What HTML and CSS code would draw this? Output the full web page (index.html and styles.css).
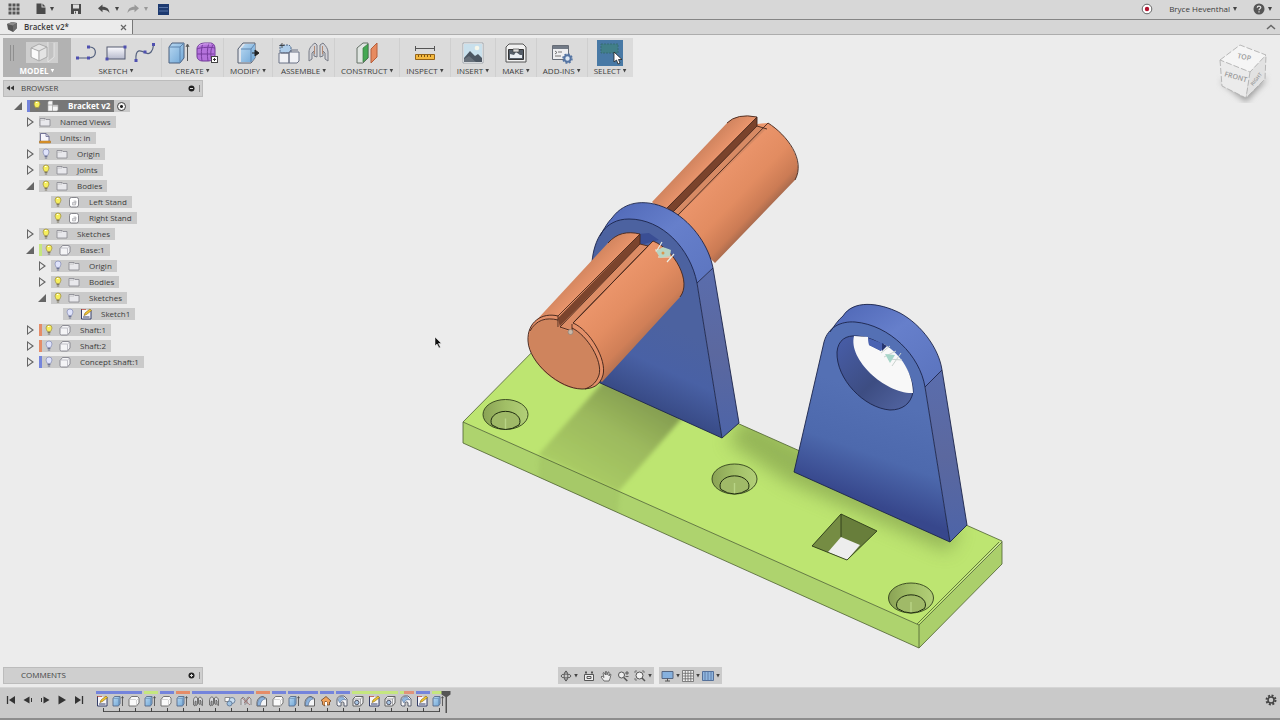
FILE: index.html
```html
<!DOCTYPE html>
<html lang="en">
<head>
<meta charset="utf-8">
<title>Bracket v2</title>
<link rel="stylesheet" href="styles.css">
</head>
<body>
<svg class="defs" aria-hidden="true">
  <defs>
    <linearGradient id="gBlue" x1="0" y1="0" x2="1" y2="1"><stop offset="0" stop-color="#b9d9f2"/><stop offset="1" stop-color="#6fa6d6"/></linearGradient>
    <linearGradient id="gRect" x1="0" y1="0" x2="0" y2="1"><stop offset="0" stop-color="#fbfbff"/><stop offset="1" stop-color="#b5b9cc"/></linearGradient>
    <symbol id="bulb" viewBox="0 0 8 12"><path d="M4 1a3 3 0 0 0-3 3c0 1.500 1 2 1.400 3.500h3.200C6 6 7 5.500 7 4a3 3 0 0 0-3-3z" fill="#f6ee5c" stroke="#a39648" stroke-width=".8"/><path d="M3 2.500h1.500" stroke="#fff"/><path d="M2.600 8.500h2.800M2.800 10h2.400" stroke="#7d7763" stroke-width="1"/></symbol>
    <symbol id="bulboff" viewBox="0 0 8 12"><path d="M4 1a3 3 0 0 0-3 3c0 1.500 1 2 1.400 3.500h3.200C6 6 7 5.500 7 4a3 3 0 0 0-3-3z" fill="#dfe3fb" stroke="#8389b5" stroke-width=".7"/><path d="M2.600 8.500h2.800M2.800 10h2.400" stroke="#6d7290" stroke-width="1"/></symbol>
    <symbol id="folder" viewBox="0 0 12 12"><path d="M1 10V2.500h5l1 1h4V10z" fill="#e8e8ec" stroke="#85858d" stroke-width=".8"/><path d="M1.500 3.800h4.800" stroke="#fff"/><path d="M6 2.500V4H1" fill="none" stroke="#85858d" stroke-width=".5"/></symbol>
    <symbol id="body" viewBox="0 0 12 12"><rect x="1.500" y="1.500" width="9" height="9.500" rx="2" fill="#fff" stroke="#6d6d75" stroke-width=".8"/><path d="M4.500 9V6.500h3V9zM5.500 5h2.500v2.500" fill="#ddd" stroke="#a5a5ad" stroke-width=".6"/></symbol>
    <symbol id="comp" viewBox="0 0 12 12"><path d="M1 4.500 3.500 1.500H9q2 0 2 1.500v5L8.500 11H2.500Q1 11 1 9.500z" fill="#f4f4f6" stroke="#777781" stroke-width=".8"/><path d="M1.500 4h6q1 0 1 1v5.500M8.300 4.200 10.600 2" fill="none" stroke="#aaaab4" stroke-width=".7"/></symbol>
    <symbol id="asm" viewBox="0 0 12 12"><path d="M1 10V2l1-1h3.500v4H11v4.500L10 11H1z" fill="#f5f5f5" stroke="#aaa" stroke-width=".6"/><path d="M1 5h4.500M5.500 5v6M6 6h5" stroke="#999" stroke-width=".7"/></symbol>
    <symbol id="units" viewBox="0 0 12 12"><path d="M1.500 9.500v-8H7l3 3v5z" fill="#f6f5fb" stroke="#68688e" stroke-width=".9"/><path d="M7 1.500v3h3" fill="none" stroke="#68688e" stroke-width=".8"/><path d="M.5 9h11v2H.5z" fill="#e59a2d" stroke="#9c641a" stroke-width=".5"/></symbol>
    <symbol id="sketch" viewBox="0 0 12 12"><path d="M1.500 1v10H11V2.500" fill="#f7f7fa" stroke="#333d68" stroke-width="1"/><path d="M3 9h6.500" stroke="#333d68"/><path d="m4 7.500 1-2.500 5-4 1.500 1.500-5 4z" fill="#f2c52f" stroke="#856414" stroke-width=".6"/><path d="M1 1.500h5" stroke="#b83b2b" stroke-width=".7"/></symbol>
    <symbol id="extrude" viewBox="0 0 12 12"><path d="M1 3.500 2.500 1.500h5.500v7L6.500 11H1z" fill="url(#gBlue)" stroke="#4b5e7d" stroke-width=".8"/><path d="M1 3.500h5.500V11M6.500 3.500 8 1.500" fill="none" stroke="#6689b0" stroke-width=".6"/><path d="M10.500 11V2M9.400 3.200 10.500 1.500 11.600 3.200" fill="none" stroke="#444" stroke-width=".8"/></symbol>
    <symbol id="box" viewBox="0 0 12 12"><path d="M1 4.500 3.500 1.500H9.500L11 3v5L8.500 11H1z" fill="#fafafa" stroke="#666" stroke-width=".9"/><path d="M8.500 11V5.500L11 3M8.500 5.500 7.500 4.500H1.500" fill="none" stroke="#bbb" stroke-width=".6"/></symbol>
    <symbol id="joint" viewBox="0 0 12 12"><path d="M1.500 10V6C1.500 2 4 1 5.500 3V9.500L4 10.500V6l-1 .5V11zM6.500 3c2-2 4 0 4 3v4.500l-1.500-1V6l-1-1v4.500l-1.500-1z" fill="#d9dade" stroke="#555" stroke-width=".8"/></symbol>
    <symbol id="parts" viewBox="0 0 12 12"><path d="M1 2.500h5v4H1z" fill="#fafafa" stroke="#777" stroke-width=".8"/><circle cx="8" cy="5.500" r="3" fill="#c7dcef" stroke="#586f8d" stroke-width=".8"/><circle cx="5.500" cy="8.500" r="2.500" fill="#9fc3e3" stroke="#586f8d" stroke-width=".8"/></symbol>
    <symbol id="rigid" viewBox="0 0 12 12"><path d="M1 10V4l2-2 2 2v6M7 9V3l2-1 2 2v6" fill="#d2d2d6" stroke="#777" stroke-width=".8"/><path d="m2 3 8 7M10 2 4 8" stroke="#a06868" stroke-width=".8"/></symbol>
    <symbol id="fillet" viewBox="0 0 12 12"><path d="M1 11V8c0-4 3-6.500 6-6.500l3.500 2V11z" fill="#f4f5f7" stroke="#555" stroke-width=".9"/><path d="M1.500 8C2 4.500 4 2 7 1.800L9.500 4C6.500 4 4.500 7 4.300 10.500H1.500z" fill="#8cb2dc" stroke="#4e6384" stroke-width=".6"/></symbol>
    <symbol id="home" viewBox="0 0 12 12"><path d="M1 5.500 6 1.500l5 4.500-1.500 1V10H7V7L5 6.500V11L2.500 9.500v-3z" fill="#f2a45c" stroke="#6b4426" stroke-width=".8"/><path d="M5 7h2v3.500H5z" fill="#fff"/></symbol>
    <symbol id="shell" viewBox="0 0 12 12"><path d="M1 10V5c0-2.500 2-4 4-4h3l3 3v7H8V8c0-1.500-3-1.500-3 0v3H2z" fill="#f5f5f7" stroke="#4f5565" stroke-width=".9"/><path d="M2 5c1-3 3-3.500 5-3l3 3c-3-1-5 0-6 3z" fill="#94b8de" stroke="#4d648a" stroke-width=".5"/></symbol>
    <symbol id="hole" viewBox="0 0 12 12"><path d="M1 4 3.500 1.500H11V8l-2.500 3H1z" fill="#f3f3f5" stroke="#555" stroke-width=".9"/><path d="M1 4h7.500v7M8.500 4 11 1.500" fill="none" stroke="#777" stroke-width=".6"/><circle cx="4.800" cy="7.500" r="2.200" fill="#a9c6e4" stroke="#445" stroke-width=".9"/></symbol>
    <symbol id="gear" viewBox="0 0 12 12"><circle cx="6" cy="6" r="4.500" fill="none" stroke="#444" stroke-width="2" stroke-dasharray="2 1.530"/><circle cx="6" cy="6" r="3" fill="none" stroke="#444" stroke-width="1.500"/></symbol>
  </defs>
</svg>

<header class="appbar">
  <button class="tool" aria-label="Data panel"><svg width="12" height="12" viewBox="0 0 12 12"><path d="M.5.500h3v3h-3zm4 0h3v3h-3zm4 0h3v3h-3zm-8 4h3v3h-3zm4 0h3v3h-3zm4 0h3v3h-3zm-8 4h3v3h-3zm4 0h3v3h-3zm4 0h3v3h-3z" fill="#555"/></svg></button>
  <button class="tool file" aria-label="File"><svg width="10" height="12" viewBox="0 0 10 12"><path d="M.5.500h5v4h4V11h-9zM6.500.500l3 3h-3z" fill="#4a4a4a"/></svg><i class="caret"></i></button>
  <button class="tool" aria-label="Save"><svg width="12" height="12" viewBox="0 0 12 12"><path d="M1 1h10v10H1z" fill="#4a4a4a"/><path d="M3 1.500h6v4H3zM4 8h4v3H4z" fill="#ddd"/><path d="M5 8.500h1v2H5z" fill="#4a4a4a"/></svg></button>
  <button class="tool undo" aria-label="Undo"><svg width="12" height="10" viewBox="0 0 12 10"><path d="M0 4.200 4.500.500v2.300C9 2.800 11 5 11.500 9 10 6.500 8 5.800 4.500 5.800v2.400z" fill="#4a4a4a"/></svg><i class="caret"></i></button>
  <button class="tool redo" aria-label="Redo"><svg width="12" height="10" viewBox="0 0 12 10"><path d="M12 4.200 7.500.500v2.300C3 2.800 1 5 .5 9 2 6.500 4 5.800 7.500 5.800v2.400z" fill="#999"/></svg><i class="caret"></i></button>
  <button class="tool" aria-label="Job status"><svg width="11" height="11" viewBox="0 0 11 11"><path d="M0 0h11v11H0z" fill="#1d3a70"/><path d="M1 3.500h9M1 7h9" stroke="#6482b4" stroke-width=".8"/></svg></button>
  <span class="fill"></span>
  <button class="tool rec" aria-label="Record"><svg width="12" height="12" viewBox="0 0 12 12"><circle cx="6" cy="6" r="4.800" fill="#fff" stroke="#666" stroke-width="1"/><circle cx="6" cy="6" r="2.200" fill="#b3122e"/></svg></button>
  <button class="tool user">Bryce Heventhal<i class="caret"></i></button>
  <button class="tool help" aria-label="Help"><svg width="12" height="12" viewBox="0 0 12 12"><circle cx="6" cy="6" r="5.500" fill="#555"/><path d="M4.200 4.800C4.200 2.500 7.800 2.500 7.800 4.600 7.800 5.800 6 5.800 6 7.200M6 8.200v1.300" fill="none" stroke="#e5e5e5" stroke-width="1.200"/></svg><i class="caret"></i></button>
</header>

<nav class="tabs">
  <div class="tab"><svg width="12" height="12" viewBox="0 0 12 12"><path d="M1 3 6 1l5 1v5L7 11 2 8.500z" fill="#555"/><path d="M1 3 6 1l5 1-4 2.500z" fill="#8b8b8b"/><path d="M7 4.500 11 2v5L7 11z" fill="#6c6c6c"/></svg><span>Bracket v2*</span><button aria-label="Close tab"><svg width="7" height="7" viewBox="0 0 7 7"><path d="m1 1 5 5M6 1 1 6" stroke="#666" stroke-width="1.200"/></svg></button></div>
  <button class="collapse" aria-label="Collapse"><svg width="10" height="6" viewBox="0 0 10 6"><path d="m1 5 4-3.500L9 5" fill="none" stroke="#666" stroke-width="1.500"/></svg></button>
</nav>

<main class="workspace">
  <svg class="model" viewBox="0 35 1280 652" role="img" aria-label="Bracket assembly">
    <defs>
      <linearGradient id="shA" gradientUnits="userSpaceOnUse" x1="575" y1="275" x2="645" y2="345"><stop offset="0" stop-color="#d2855f"/><stop offset=".22" stop-color="#ee986e"/><stop offset=".6" stop-color="#e38d62"/><stop offset=".85" stop-color="#d07f57"/><stop offset="1" stop-color="#ab6d50"/></linearGradient>
      <linearGradient id="shB" gradientUnits="userSpaceOnUse" x1="690" y1="160" x2="757" y2="224"><stop offset="0" stop-color="#cf835e"/><stop offset=".22" stop-color="#ed976e"/><stop offset=".65" stop-color="#e28c61"/><stop offset=".88" stop-color="#cb7b54"/><stop offset="1" stop-color="#9f664c"/></linearGradient>
      <linearGradient id="stL" gradientUnits="userSpaceOnUse" x1="680" y1="330" x2="645" y2="406"><stop offset="0" stop-color="#4c62a0"/><stop offset=".5" stop-color="#4961a5"/><stop offset="1" stop-color="#374984"/></linearGradient>
      <linearGradient id="stR" gradientUnits="userSpaceOnUse" x1="890" y1="400" x2="855" y2="498"><stop offset="0" stop-color="#5470b4"/><stop offset=".55" stop-color="#4d69ad"/><stop offset="1" stop-color="#37478c"/></linearGradient>
      <linearGradient id="rim" x1="0" y1="0" x2="1" y2="1"><stop offset="0" stop-color="#4d65b4"/><stop offset=".45" stop-color="#667fcb"/><stop offset="1" stop-color="#5a73bd"/></linearGradient>
      <linearGradient id="edge" x1="0" y1="0" x2="0" y2="1"><stop offset="0" stop-color="#5a6dad"/><stop offset=".5" stop-color="#5b689f"/><stop offset="1" stop-color="#4d64a8"/></linearGradient>
      <linearGradient id="bore" x1="0" y1="0" x2="1" y2="1"><stop offset="0" stop-color="#485eaa"/><stop offset=".55" stop-color="#3d4d82"/><stop offset="1" stop-color="#5467a5"/></linearGradient>
      <linearGradient id="cone" x1="0" y1="0" x2="1" y2="0"><stop offset="0" stop-color="#8aa255"/><stop offset=".5" stop-color="#a1bf66"/><stop offset="1" stop-color="#b2cf78"/></linearGradient>
      <linearGradient id="cast" gradientUnits="userSpaceOnUse" x1="640" y1="395" x2="590" y2="480"><stop offset="0" stop-color="#849d50"/><stop offset=".45" stop-color="#9cb95d"/><stop offset="1" stop-color="#a9cb65"/></linearGradient>
      <filter id="soft" x="-20%" y="-20%" width="140%" height="140%"><feGaussianBlur stdDeviation="2"/></filter>
      <filter id="softer" x="-30%" y="-30%" width="160%" height="160%"><feGaussianBlur stdDeviation="9"/></filter>
      <clipPath id="top"><path d="m463 422 83-84 456 203-83 84z"/></clipPath>
      <clipPath id="front"><path d="m463 422 456 203v23L463 443z"/></clipPath>
      <symbol id="bore-hole" viewBox="0 0 48 34" overflow="visible">
        <ellipse cx="24" cy="17" rx="22.500" ry="15" fill="url(#cone)" stroke="#31401c" stroke-width=".9"/>
        <path d="M10.500 27.500a14.500 10 0 1 1 27 0Q24 36.500 10.500 27.500z" fill="#a0ba68" stroke="#1f2b10" stroke-width="1"/>
        <path d="M24 31V21" stroke="#b9d486" stroke-width="1.400"/>
      </symbol>
    </defs>

    <path d="m463 422 83-84 456 203-83 84z" fill="#bde571"/>
    <path d="m463 422 456 203v23L463 443z" fill="#aed36e"/>
    <path d="m919 625 83-83v22l-83 84z" fill="#abcf6b"/>
    <g clip-path="url(#top)">
      <path d="m604 381-66 74 80 37 65-75z" fill="url(#cast)" filter="url(#soft)"/>
      <path d="m745 415 75 40 140 75-12 22-160-70-60-40z" fill="#7c9746" opacity=".6" filter="url(#softer)"/>
    </g>
    <g clip-path="url(#front)"><path d="m540 452 80 36-4 35-78-35z" fill="#9ebf62" filter="url(#soft)" opacity=".5"/></g>
    <g fill="none" stroke="#4d6130" stroke-width=".8">
      <path d="m463 422 83-84 456 203v23l-83 84-456-205zM463 422l456 203v23M919 625l83-83M917 624l82-82"/>
    </g>
    <use href="#bore-hole" x="481.500" y="397.500" width="48" height="34"/>
    <use href="#bore-hole" x="710.500" y="462" width="48" height="34"/>
    <use href="#bore-hole" x="887" y="581" width="48" height="34"/>
    <path d="m841 514 36 17-30 29-35-14z" fill="#687e3b"/>
    <path d="m841 514-29 32 16 6 13-15z" fill="#758c43"/>
    <path d="m841 537 19 8-13 15-19-8z" fill="#ededed"/>
    <path d="m841 514 36 17-30 29-35-14zM841 514v23" fill="none" stroke="#2d3b18" stroke-width=".9"/>

    <path d="M652 202 727 123Q737 113 757 117v7l11-1C785 133 806 160 795 180L715 263z" fill="url(#shB)"/>
    <path d="m757 117-90 91 7 5 83-87z" fill="#7a432c"/>
    <path d="m757 126 9 3-89 88-5-4z" fill="#d78a64"/>
    <path d="M727 123Q737 113 757 117v9l10 3M768 123C787 135 806 160 795 180M768 123l-91 93M757 117l-90 91M757 126l-84 86" fill="none" stroke="#43251b" stroke-width=".9"/>

    <path d="M600 236C605 227 608 222 612 218 625 200 648 198 672 211 694 224 709 247 713 268L697 283 682 300z" fill="url(#rim)"/>
    <path d="M592 262C594 240 604 219 629 219 662 219 690 248 697 283L722 438 567 368z" fill="url(#stL)"/>
    <path d="m697 283 16-15 26 155-17 15z" fill="url(#edge)"/>
    <path d="M567 368 592 262C594 240 604 219 629 219 662 219 690 248 697 283L722 438zM600 236C605 227 608 222 612 218 625 200 648 198 672 211 694 224 709 247 713 268l26 155-17 15M697 283l16-15" fill="none" stroke="#1b2449" stroke-width=".9"/>
    <path d="m638 234 3 11 10-3 8-2-10-7z" fill="#3a4e94"/>

    <path d="M532 325 608 243C617 233 627 231 640 234v10l8 2 5-5C675 250 692 282 680 297L602 382z" fill="url(#shA)"/>
    <path d="M528 341C527 322 542 312 558 316L559 327l13 3 1-7C590 330 607 360 603 375 600 386 592 389 582 389 560 389 529 363 528 341z" fill="#e38f68"/>
    <path d="M529 342C528 324 543 317 558 320v7l12 5 2-4C587 335 603 361 599 375 596 385 589 389 580 389 560 389 530 365 529 342z" fill="#cf845d"/>
    <path d="m558 318 82-84v10l-80 84z" fill="#7b442d"/>
    <path d="m559 327 81-83 8 2-76 80v5z" fill="#dc8c65"/>
    <path d="M608 243C617 233 627 231 640 234v10l8 2M653 241C675 250 692 282 680 297M653 241 573 323M640 234l-82 82v11M640 244l-80 83 12 4v-7M648 246l-74 76" fill="none" stroke="#45261b" stroke-width=".9"/>
    <path d="M528 341C527 322 542 312 558 316M573 323C590 330 607 360 603 375 600 386 592 389 582 389 560 389 529 363 528 341M530 331C536 320 546 317 558 320M572 328C587 335 603 361 599 375 596 384 590 387 585 389" fill="none" stroke="#3a2018" stroke-width=".9"/>
    <g stroke="#e9eee6" stroke-width="1.200" fill="none"><path d="m656 252 6-10M667 262l7-8M655 250h14M658 257h14"/></g>
    <path d="m656 251 7-4 8 3-1 6-10 2z" fill="#b9d5c3"/><circle cx="663" cy="253" r="1.500" fill="#d8974f"/>
    <circle cx="570.500" cy="332" r="2.500" fill="#c9b9a8" stroke="#8d8178" stroke-width=".7"/>

    <path d="M830 332C835 325 838 320 843 316 853 300 878 302 900 313 922 325 939 349 942 370L925 387 880 345z" fill="url(#rim)"/>
    <path d="M794 472 824 342C828 327 841 321 855 322 890 325 920 356 925 387L950 542z" fill="url(#stR)"/>
    <path d="m925 387 17-17 25 155-17 17z" fill="url(#edge)"/>
    <path d="M794 472 824 342C828 327 841 321 855 322 890 325 920 356 925 387L950 542zM830 332C835 325 838 320 843 316 853 300 878 302 900 313 922 325 939 349 942 370l25 155-17 17M925 387l17-17" fill="none" stroke="#1b2449" stroke-width=".9"/>
    <path d="M837 352C838 340 846 335 857 336 888 338 914 371 913 392 911 404 902 410 890 410 864 408 836 379 837 352z" fill="url(#bore)" stroke="#1b2449" stroke-width=".9"/>
    <path d="M854 336 868 337 869 345 881 351 884 344C902 355 913 374 913 393 886 394 848 360 854 336z" fill="#f8f8f8"/>
    <path d="m868 338 1 7 12 6 3-7z" fill="#4a63b2"/>
    <path d="M882 351v-8l5 3z" fill="#26356f"/>
    <g stroke="#c9d3cf" stroke-width="1" fill="none"><path d="m881 353 9-7M892 366l9-13M884 357l12-6M888 359l14 1"/></g>
    <path d="m885 354 10 1-5 8z" fill="#a7d5c8"/>

    <path d="M435 337v9l2-2 2 4 1.500-.7-2-3.800h3z" fill="#111" stroke="#fff" stroke-width=".5"/>
  </svg>

  <div class="ribbon" role="toolbar" aria-label="Model tools">
    <button class="group mode"><span class="icons"><i class="grip"></i><svg width="32" height="24" viewBox="0 0 32 24"><path d="M0 1h32v21H0z" fill="#cecece"/><path d="M22 1v20l6-5V2" fill="#c2c2c2" stroke="#eee" stroke-width=".7"/><path d="m5 7 8-4 8 3v10l-8 4-8-4z" fill="#e4e4e4" stroke="#aaa"/><path d="m5 7 8 3 8-4M13 10v10" fill="none" stroke="#aaa"/><path d="m6 8 6 2.500v8L6 16z" fill="#fafafa"/></svg></span><span class="label">MODEL<i class="caret"></i></span></button>
    <div class="group"><span class="icons">
      <button aria-label="Line"><svg width="24" height="24" viewBox="0 0 24 24"><path d="M2 17h11c10 0 9-11 2-11" fill="none" stroke="#54617e" stroke-width="1.200"/><path d="M1 15.500h3v3H1zm11 0h3v3h-3zM12 4.500h3v3h-3z" fill="#4f50b0"/></svg></button>
      <button aria-label="Rectangle"><svg width="24" height="24" viewBox="0 0 24 24"><rect x="3" y="6" width="18" height="12" fill="url(#gRect)" stroke="#555b70"/><path d="M19.500 4.500h3v3h-3zM1.500 16.500h3v3h-3z" fill="#4f50b0"/></svg></button>
      <button aria-label="Spline"><svg width="24" height="24" viewBox="0 0 24 24"><path d="M3 19C2 6 9 10 13 12s7-2 7.500-8" fill="none" stroke="#54617e" stroke-width="1.200"/><path d="M1.500 18h3v3h-3zm9-8.500h3v3h-3zM19 2h3v3h-3z" fill="#4f50b0"/></svg></button>
    </span><button class="label">SKETCH<i class="caret"></i></button></div>
    <div class="group"><span class="icons">
      <button aria-label="Extrude"><svg width="24" height="24" viewBox="0 0 24 24"><path d="M3 6 6 2h12v15l-4 5H3z" fill="url(#gBlue)" stroke="#4b5e7d"/><path d="M3 6h11v16M14 6l4-4" fill="none" stroke="#5d84ae"/><path d="M21.500 20V4M20 6l1.500-3L23 6" fill="none" stroke="#555"/></svg></button>
      <button aria-label="Create form"><svg width="24" height="24" viewBox="0 0 24 24"><path d="M2 8C2 4 6 2 10 2h5c4 0 5 3 5 6v6c0 4-4 6-7 6H8c-4 0-6-2-6-5z" fill="#b472dc" stroke="#713b99"/><path d="M2 8c4-2 14-2 18-1M2 13h17M8 2C6 7 6 14 7 20M14 2c-2 5-2 12-1 18M18 4c-3 5-2 9-2 14" fill="none" stroke="#773d9e"/><path d="M4 5c3-3 9-2 12-2" stroke="#dbaef2" fill="none"/><rect x="16.500" y="15.500" width="6" height="6" fill="#fff" stroke="#444"/><path d="M19.500 17v3M18 18.500h3" stroke="#333"/></svg></button>
    </span><button class="label">CREATE<i class="caret"></i></button></div>
    <div class="group"><span class="icons">
      <button aria-label="Press pull"><svg width="24" height="24" viewBox="0 0 24 24"><path d="M2 8 7 2h12v15l-4 5H2z" fill="#e1e5eb" stroke="#555f70"/><path d="M5 8 9 3h10v14l-4 4H5z" fill="url(#gBlue)"/><path d="M5 8h10v13M15 8l4-5" fill="none" stroke="#5d84ae"/><path d="M16 12h4M19 9l4 3-4 3z" fill="#222" stroke="#222"/></svg></button>
    </span><button class="label">MODIFY<i class="caret"></i></button></div>
    <div class="group"><span class="icons">
      <button aria-label="New component"><svg width="24" height="24" viewBox="0 0 24 24"><path d="M3 4h9l2 2v6H3z" fill="#aecdea" stroke="#516786" stroke-dasharray="2 1"/><path d="M2 12h10v10H2zM12 11h10v9l-2 2h-8z" fill="#f0f1f5" stroke="#6b7286"/><path d="M4 12h8l2-3h7" fill="none" stroke="#6b7286"/><path d="M5 2v5M2.500 4.500h5" stroke="#333" stroke-width=".8"/></svg></button>
      <button aria-label="Joint"><svg width="24" height="24" viewBox="0 0 24 24"><path d="M3 20V11c0-4 3-7 6-9l2 2v12l-3-1v-5l-2 2v6zM14 4l3-2c3 3 5 6 5 9v9l-3-2v-6l-2-2v5l-3 1z" fill="#d3d3d7" stroke="#777b86"/><path d="M8.500 5v8M16.500 5v8" stroke="#b58a72"/></svg></button>
    </span><button class="label">ASSEMBLE<i class="caret"></i></button></div>
    <div class="group"><span class="icons">
      <button aria-label="Plane"><svg width="24" height="24" viewBox="0 0 24 24"><path d="M2 7 8 2h5v15l-5 5H2z" fill="#dfe5e1" stroke="#657067"/><path d="m8 7 5-4v14l-5 4z" fill="#44a852" stroke="#387640" stroke-width=".7"/><path d="m16 8 6-6v14l-6 6z" fill="#e78b60" stroke="#b75f3b"/></svg></button>
    </span><button class="label">CONSTRUCT<i class="caret"></i></button></div>
    <div class="group"><span class="icons">
      <button aria-label="Measure"><svg width="24" height="24" viewBox="0 0 24 24"><path d="M2 7.500h20M2.500 5v5M21.500 5v5" stroke="#555"/><path d="M2.500 13.500h19v5h-19z" fill="#f4b940" stroke="#956418"/><path d="M5.500 14v2m3-2v2m3-2v2m3-2v2m3-2v2" stroke="#7c5314"/></svg></button>
    </span><button class="label">INSPECT<i class="caret"></i></button></div>
    <div class="group"><span class="icons">
      <button aria-label="Insert image"><svg width="24" height="24" viewBox="0 0 24 24"><path d="M2.500 2.500h19v19h-19z" fill="#c9e0ec" stroke="#fff"/><path d="M2 2h20v20H2z" fill="none" stroke="#8b949c" stroke-width=".7"/><circle cx="16" cy="7" r="2.300" fill="#f7f7ea"/><path d="m3 17 6-7 5 5 3-2 4 4v4H3z" fill="#4c5662"/><path d="m3 18 5-3 7 6H3z" fill="#68717b"/></svg></button>
    </span><button class="label">INSERT<i class="caret"></i></button></div>
    <div class="group"><span class="icons">
      <button aria-label="3D print"><svg width="24" height="24" viewBox="0 0 24 24"><path d="M2 6 5 3h14l3 3v15H2z" fill="#f1f1f1" stroke="#555"/><path d="M4.500 8.500h15v10h-15z" fill="#555e69" stroke="#333"/><path d="M6 17v-4l4 1 2-3 4 3h2v3z" fill="#e8edf2"/><path d="M9 8h6v3H9z" fill="#ddd" stroke="#333" stroke-width=".6"/></svg></button>
    </span><button class="label">MAKE<i class="caret"></i></button></div>
    <div class="group"><span class="icons">
      <button aria-label="Scripts"><svg width="24" height="24" viewBox="0 0 24 24"><path d="M2.500 4.500h16v14h-16z" fill="#eeeff1" stroke="#676d77"/><path d="M3 5h15v3H3z" fill="#737b87"/><path d="m5 10 2 1.500L5 13M8 11h4M5 15h6" fill="none" stroke="#555" stroke-width=".8"/><circle cx="17.500" cy="17.500" r="3.200" fill="#dce7f3" stroke="#5575a3" stroke-width="2"/><circle cx="17.500" cy="17.500" r="4.500" fill="none" stroke="#5575a3" stroke-width="1.500" stroke-dasharray="2 1.500"/></svg></button>
    </span><button class="label">ADD-INS<i class="caret"></i></button></div>
    <div class="group"><span class="icons">
      <button class="select" aria-label="Select"><svg width="26" height="26" viewBox="0 0 26 26"><path d="M0 0h26v26H0z" fill="#4879a5"/><path d="M4 4h17v9H4z" fill="#417f88" stroke="#366d75" stroke-dasharray="2 1"/><path d="M17 12v10l2.500-2 1.500 4 2-1-1.500-3.500H25z" fill="#fff" stroke="#222" stroke-width=".8"/></svg></button>
    </span><button class="label">SELECT<i class="caret"></i></button></div>
  </div>

  <section class="browser">
    <header class="panel"><svg width="8" height="6" viewBox="0 0 8 6"><path d="M4 .500v5L.5 3zM8 .500v5L4.500 3z" fill="#333"/></svg><h2>BROWSER</h2><button aria-label="Minimise browser"><svg width="7" height="7" viewBox="0 0 7 7"><circle cx="3.500" cy="3.500" r="3" fill="#222"/><path d="M2 3.500h3" stroke="#ddd"/></svg></button></header>
    <ul class="tree">
      <li><div class="row"><button class="tw open" aria-label="Collapse Bracket v2"></button><span class="pill root"><span class="sel"><i class="bar blue"></i><svg class="bulb"><use href="#bulb"/></svg><svg class="ico"><use href="#asm"/></svg>Bracket v2</span><input type="radio" checked aria-label="Activate Bracket v2"></span></div>
      <ul>
        <li><div class="row"><button class="tw" aria-label="Expand Named Views"></button><span class="pill"><svg class="ico"><use href="#folder"/></svg>Named Views</span></div></li>
        <li><div class="row"><i class="tw none"></i><span class="pill"><svg class="ico"><use href="#units"/></svg>Units: in</span></div></li>
        <li><div class="row"><button class="tw" aria-label="Expand Origin"></button><span class="pill"><svg class="bulb"><use href="#bulboff"/></svg><svg class="ico"><use href="#folder"/></svg>Origin</span></div></li>
        <li><div class="row"><button class="tw" aria-label="Expand Joints"></button><span class="pill"><svg class="bulb"><use href="#bulb"/></svg><svg class="ico"><use href="#folder"/></svg>Joints</span></div></li>
        <li><div class="row"><button class="tw open" aria-label="Collapse Bodies"></button><span class="pill"><svg class="bulb"><use href="#bulb"/></svg><svg class="ico"><use href="#folder"/></svg>Bodies</span></div>
          <ul>
            <li><div class="row"><i class="tw none"></i><span class="pill"><svg class="bulb"><use href="#bulb"/></svg><svg class="ico"><use href="#body"/></svg>Left Stand</span></div></li>
            <li><div class="row"><i class="tw none"></i><span class="pill"><svg class="bulb"><use href="#bulb"/></svg><svg class="ico"><use href="#body"/></svg>Right Stand</span></div></li>
          </ul></li>
        <li><div class="row"><button class="tw" aria-label="Expand Sketches"></button><span class="pill"><svg class="bulb"><use href="#bulb"/></svg><svg class="ico"><use href="#folder"/></svg>Sketches</span></div></li>
        <li><div class="row"><button class="tw open" aria-label="Collapse Base:1"></button><span class="pill"><i class="bar green"></i><svg class="bulb"><use href="#bulb"/></svg><svg class="ico"><use href="#comp"/></svg>Base:1</span></div>
          <ul>
            <li><div class="row"><button class="tw" aria-label="Expand Origin"></button><span class="pill"><svg class="bulb"><use href="#bulboff"/></svg><svg class="ico"><use href="#folder"/></svg>Origin</span></div></li>
            <li><div class="row"><button class="tw" aria-label="Expand Bodies"></button><span class="pill"><svg class="bulb"><use href="#bulb"/></svg><svg class="ico"><use href="#folder"/></svg>Bodies</span></div></li>
            <li><div class="row"><button class="tw open" aria-label="Collapse Sketches"></button><span class="pill"><svg class="bulb"><use href="#bulb"/></svg><svg class="ico"><use href="#folder"/></svg>Sketches</span></div>
              <ul><li><div class="row"><i class="tw none"></i><span class="pill"><svg class="bulb"><use href="#bulboff"/></svg><svg class="ico"><use href="#sketch"/></svg>Sketch1</span></div></li></ul></li>
          </ul></li>
        <li><div class="row"><button class="tw" aria-label="Expand Shaft:1"></button><span class="pill"><i class="bar orange"></i><svg class="bulb"><use href="#bulb"/></svg><svg class="ico"><use href="#comp"/></svg>Shaft:1</span></div></li>
        <li><div class="row"><button class="tw" aria-label="Expand Shaft:2"></button><span class="pill"><i class="bar orange"></i><svg class="bulb"><use href="#bulboff"/></svg><svg class="ico"><use href="#comp"/></svg>Shaft:2</span></div></li>
        <li><div class="row"><button class="tw" aria-label="Expand Concept Shaft:1"></button><span class="pill"><i class="bar blue"></i><svg class="bulb"><use href="#bulboff"/></svg><svg class="ico"><use href="#comp"/></svg>Concept Shaft:1</span></div></li>
      </ul></li>
    </ul>
  </section>

  <svg class="viewcube" width="56" height="62" viewBox="0 0 56 62" role="img" aria-label="View cube">
    <defs><filter id="cs" x="-30%" y="-30%" width="160%" height="160%"><feGaussianBlur stdDeviation="3"/></filter></defs>
    <path d="m4 40 26 21 21-23z" fill="#999" filter="url(#cs)"/>
    <path d="M4 19 24 4l26 10-16 17z" fill="#f5f5f5"/><path d="m4 19 30 12-4 26L6 45z" fill="#ebebeb"/><path d="m34 31 16-17-1 24-19 19z" fill="#e2e2e2"/>
    <path d="M4 19 24 4l26 10-16 17zM4 19l2 26 24 12 19-19 1-24M34 31l-4 26" fill="none" stroke="#b0b0b0" stroke-width=".9" stroke-dasharray="6 2"/>
    <text x="21" y="17" transform="rotate(12 21 17)">TOP</text><text x="8" y="35" transform="rotate(16 8 35)">FRONT</text><text class="side" x="37" y="45" transform="rotate(-52 37 45)">RIGHT</text>
  </svg>

  <footer class="dock">
    <section class="panel comments"><h2>COMMENTS</h2><button aria-label="Expand comments"><svg width="7" height="7" viewBox="0 0 7 7"><circle cx="3.500" cy="3.500" r="3" fill="#222"/><path d="M2 3.500h3M3.500 2v3" stroke="#ddd"/></svg></button></section>
    <div class="nav" role="toolbar" aria-label="Navigation">
      <div class="set">
        <button aria-label="Orbit"><svg width="12" height="12" viewBox="0 0 12 12"><ellipse cx="6" cy="6" rx="5" ry="2" fill="none" stroke="#555"/><ellipse cx="6" cy="6" rx="1.800" ry="4.800" fill="none" stroke="#666"/><path d="M4.500 2.500 6 .500l1.500 2M4.500 9.500l1.500 2 1.500-2" fill="#555"/></svg><i class="caret"></i></button>
        <button aria-label="Look at"><svg width="12" height="12" viewBox="0 0 12 12"><path d="M1.500 4.500h9v6h-9zM4 6.500h4v2H4z" fill="#eee" stroke="#555"/><path d="M2 2.500h2M8 2.500h2M3 1v3M9 1v3" fill="none" stroke="#555"/></svg></button>
        <button aria-label="Pan"><svg width="12" height="12" viewBox="0 0 12 12"><path d="M4 11 1 7l1-1 2 1.500L3 3l1-.5L5.500 5V1.500h1L7 5l1-3h1v4l1-2 1 .5-1 4L9 11z" fill="#eee" stroke="#555" stroke-width=".8"/></svg></button>
        <button aria-label="Zoom"><svg width="12" height="12" viewBox="0 0 12 12"><circle cx="4.500" cy="5" r="3" fill="#eee" stroke="#555"/><path d="m6.800 7.500 3.500 3.500" stroke="#555" stroke-width="1.500"/><path d="M8 3h4M10 1v4M8.500 6.500h3" stroke="#444" stroke-width=".8"/></svg></button>
        <button aria-label="Fit"><svg width="12" height="12" viewBox="0 0 12 12"><path d="M1 3V1h2M8 1h2v2M1 8v2h2" fill="none" stroke="#777"/><circle cx="5.500" cy="5.500" r="3.500" fill="#f2f2f2" stroke="#555"/><path d="m8 8 3 3" stroke="#555" stroke-width="1.500"/></svg><i class="caret"></i></button>
      </div>
      <div class="set">
        <button aria-label="Display settings"><svg width="13" height="12" viewBox="0 0 13 12"><path d="M1 1.500h11v7H1z" fill="#86b1de" stroke="#566783"/><path d="M4 11h5M6.500 8.500V11" stroke="#555"/></svg><i class="caret"></i></button>
        <button aria-label="Grid and snaps"><svg width="12" height="12" viewBox="0 0 12 12"><path d="M.5.500h11v11H.5z" fill="#f2f2f2"/><path d="M.5.500h11v11H.5zM3.300 1v10M6 1v10M8.800 1v10M1 3.300h10M1 6h10M1 8.800h10" fill="none" stroke="#666" stroke-width=".8"/></svg><i class="caret"></i></button>
        <button aria-label="Viewports"><svg width="12" height="12" viewBox="0 0 12 12"><path d="M.5 1.500h11v9H.5z" fill="#8fb6df" stroke="#54709a"/><path d="M6 2v8M3 2v8M9 2v8" stroke="#54709a" stroke-width=".8"/></svg><i class="caret"></i></button>
      </div>
    </div>
  </footer>
</main>

<footer class="timeline">
  <div class="play">
    <button aria-label="First"><svg width="10" height="10" viewBox="0 0 10 10"><path d="M1.500 1v8" stroke="#333" stroke-width="1.300"/><path d="M9 1v8L3 5z" fill="#333"/></svg></button>
    <button aria-label="Step back"><svg width="10" height="10" viewBox="0 0 10 10"><path d="M6.500 1.500v7L.5 5z" fill="#333"/><path d="M8.500 3v4" stroke="#333"/></svg></button>
    <button aria-label="Step forward"><svg width="10" height="10" viewBox="0 0 10 10"><path d="M3.500 1.500v7L9.500 5z" fill="#333"/><path d="M1.500 3v4" stroke="#333"/></svg></button>
    <button aria-label="Play"><svg width="10" height="10" viewBox="0 0 10 10"><path d="M1.500.500v9L9 5z" fill="#333"/></svg></button>
    <button aria-label="Last"><svg width="10" height="10" viewBox="0 0 10 10"><path d="M8.500 1v8" stroke="#333" stroke-width="1.300"/><path d="M1 1v8l6-4z" fill="#333"/></svg></button>
  </div>
  <div class="track">
    <i class="seg blue s3"></i><i class="seg green"></i><i class="seg blue"></i><i class="seg orange"></i><i class="seg blue s4"></i><i class="seg orange"></i><i class="seg blue"></i><i class="seg blue s2"></i><i class="seg blue"></i><i class="seg blue"></i><i class="seg green s3"></i><i class="seg mixed"></i><i class="seg blue"></i><i class="seg green"></i>
    <svg class="f"><use href="#sketch"/></svg><svg class="f"><use href="#extrude"/></svg><svg class="f"><use href="#box"/></svg><svg class="f"><use href="#extrude"/></svg><svg class="f"><use href="#box"/></svg><svg class="f"><use href="#extrude"/></svg><svg class="f"><use href="#joint"/></svg><svg class="f"><use href="#joint"/></svg><svg class="f"><use href="#parts"/></svg><svg class="f"><use href="#rigid"/></svg><svg class="f"><use href="#fillet"/></svg><svg class="f"><use href="#box"/></svg><svg class="f"><use href="#extrude"/></svg><svg class="f"><use href="#fillet"/></svg><svg class="f"><use href="#home"/></svg><svg class="f"><use href="#shell"/></svg><svg class="f"><use href="#hole"/></svg><svg class="f"><use href="#sketch"/></svg><svg class="f"><use href="#hole"/></svg><svg class="f"><use href="#shell"/></svg><svg class="f"><use href="#sketch"/></svg><svg class="f"><use href="#extrude"/></svg>
    <svg class="ticks" viewBox="0 0 352 5"><path d="M9 3.500h336" stroke="#555"/><path d="M9.500 0v4m16-4v4m16-4v4m16-4v4m16-4v4m16-4v4m16-4v4m16-4v4m16-4v4m16-4v4m16-4v4m16-4v4m16-4v4m16-4v4m16-4v4m16-4v4m16-4v4m16-4v4m16-4v4m16-4v4m16-4v4m16-4v4" stroke="#444"/></svg>
    <svg class="marker" width="10" height="22" viewBox="0 0 10 22"><path d="M.5 0h9v3.500L6 6v16H4.500V6L.5 3.500z" fill="#555"/></svg>
  </div>
  <button class="settings" aria-label="Timeline settings"><svg width="12" height="12"><use href="#gear"/></svg></button>
</footer>
</body>
</html>
```

FILE: styles.css
```css
* { box-sizing: border-box; }

body {
  margin: 0;
  height: 100vh;
  display: flex;
  flex-direction: column;
  overflow: hidden;
  background: #ececec;
  color: #3c3c3c;
  font: 8px/12px "Open Sans", "Noto Sans", sans-serif;
}

button {
  margin: 0;
  padding: 0;
  border: 0;
  background: none;
  color: inherit;
  font: inherit;
  display: flex;
  align-items: center;
}

svg { display: block; flex: none; }
ul { list-style: none; margin: 0; padding: 0; }
h2 { margin: 0; font: inherit; color: #444; }
.defs { position: absolute; width: 0; height: 0; }

.caret {
  flex: none;
  width: 4px;
  height: 4px;
  margin-left: 2px;
  background: #444;
  clip-path: polygon(0 0, 100% 0, 50% 100%);
}

/* Application bar */
.appbar {
  flex: none;
  height: 20px;
  padding: 0 8px 1px;
  display: flex;
  align-items: center;
  background: #d7d7d7;
  border-bottom: 1px solid #858585;
}
.tool { margin-right: 16px; }
.file .caret { margin-left: 4px; }
.undo .caret, .redo .caret { margin-left: 5px; }
.undo { margin-right: 8px; }
.redo { margin-right: 10px; }
.redo .caret { background: #999; }
.fill { flex: 1; }
.user .caret { margin-left: 3px; }
.help { margin-right: 0; }
.help .caret { margin-left: 3px; }

/* Document tabs */
.tabs {
  flex: none;
  height: 15px;
  display: flex;
  justify-content: space-between;
  background: #d6d6d6;
  border-bottom: 1px solid #adadad;
}
.tab {
  width: 133px;
  padding: 0 5px 0 6px;
  display: flex;
  align-items: center;
  gap: 6px;
  background: #ebebeb;
  border-right: 1px solid #777;
  font-weight: 600;
}
.tab button { margin-left: auto; }
.collapse { margin-right: 4px; }

/* Workspace */
.workspace {
  flex: 1;
  min-height: 0;
  position: relative;
  display: flex;
  flex-direction: column;
  align-items: flex-start;
  padding: 3px;
}
.model { position: absolute; inset: 0; width: 100%; height: 100%; }
.ribbon, .browser, .dock { position: relative; }

.ribbon { display: flex; height: 39px; background: #dbdbdb; }
.group {
  display: flex;
  flex-direction: column;
  align-items: center;
  padding: 2px 4px 0;
  border-right: 1px solid #cfcfcf;
}
.group:last-child { border-right: 0; }
.icons { display: flex; align-items: center; height: 25px; gap: 5px; }
.label { padding: 0 2px; display: flex; align-items: center; line-height: 11px; }
.mode { width: 68px; background: #b2b2b2; color: #fff; font-weight: 700; border: 0; }
.mode .icons { gap: 12px; padding-right: 6px; }
.mode .caret { background: #fff; }
.grip { width: 4px; height: 16px; border: solid #8f8f8f; border-width: 0 1px; }

.panel {
  width: 200px;
  height: 17px;
  padding: 0 2px 1px 17px;
  display: flex;
  align-items: center;
  background: #cfcfcf;
  border: 1px solid #bcbcbc;
}
.panel button { margin-left: auto; padding-right: 4px; border-right: 1px solid #888; }
.browser { margin-top: 3px; }
.browser .panel { padding-left: 2px; gap: 7px; }

/* Browser tree */
.tree { padding: 1px 0 0 9px; }
.tree ul { padding-left: 12px; }
.row { display: flex; align-items: center; height: 16px; gap: 3px; }
.tw { width: 12px; height: 10px; flex: none; }
.tw::before {
  content: "";
  width: 7px;
  height: 10px;
  margin-left: 3px;
  background: #666;
  clip-path: polygon(0 0, 100% 50%, 0 100%, 0 0, 1px 2px, 1px 8px, 5px 50%, 1px 2px);
}
.tw.open::before { width: 8px; height: 8px; margin-left: 2px; clip-path: polygon(100% 0, 100% 100%, 0 100%); }
.tw.none::before { display: none; }
.pill {
  height: 12px;
  padding-right: 5px;
  display: flex;
  align-items: center;
  background: #cacaca;
  white-space: nowrap;
}
.bulb { width: 8px; height: 12px; margin: 0 2px 0 3px; }
.ico { width: 12px; height: 12px; margin-right: 9px; }
.bulb + .ico { margin-left: 4px; }
.bar { width: 3px; height: 12px; }
.blue { background: #7484dc; }
.green { background: #c5e67f; }
.orange { background: #e58c68; }
.root { padding-right: 4px; gap: 3px; }
.sel { display: flex; align-items: center; padding-right: 4px; background: #777; color: #fff; font-weight: 700; }
.root input {
  appearance: none;
  margin: 0;
  width: 9px;
  height: 9px;
  border: 1px solid #444;
  border-radius: 50%;
  background: radial-gradient(circle, #222 0 1px, #f3f3f3 2px);
}

.viewcube { position: absolute; top: 6px; right: 8px; }
.viewcube text { font: 600 7px "Open Sans", sans-serif; fill: #999; }
.viewcube .side { font-size: 5px; }

/* Bottom dock */
.dock { margin-top: auto; width: 100%; display: flex; justify-content: center; }
.comments { position: absolute; left: 0; bottom: 0; }
.nav { display: flex; gap: 5px; }
.set { display: flex; align-items: center; gap: 5px; height: 17px; padding: 0 2px; background: #cbcbcb; }
.set + .set { gap: 2px; }

/* Timeline */
.timeline {
  flex: none;
  height: 33px;
  display: flex;
  align-items: flex-start;
  background: #c9c9c9;
  border-top: 1px solid #d5d5d5;
  border-bottom: 2px solid #8d8d8d;
}
.play { display: flex; gap: 7px; width: 94px; padding: 7px 0 0 6px; }
.track {
  position: relative;
  display: grid;
  grid-template-columns: repeat(22, 16px);
  grid-template-rows: 3px 12px 5px;
  row-gap: 1px;
  padding-top: 3px;
}
.seg { margin: 0 0 0 2px; }
.s2 { grid-column: span 2; }
.s3 { grid-column: span 3; }
.s4 { grid-column: span 4; }
.mixed { background: linear-gradient(90deg, #c5e67f 4px, #e0937a 4px); }
.f { width: 12px; height: 12px; justify-self: center; }
.ticks { grid-column: 1 / -1; width: 352px; height: 5px; }
.marker { position: absolute; left: 347px; top: 3px; }
.settings { margin: 6px 3px 0 auto; }
```
